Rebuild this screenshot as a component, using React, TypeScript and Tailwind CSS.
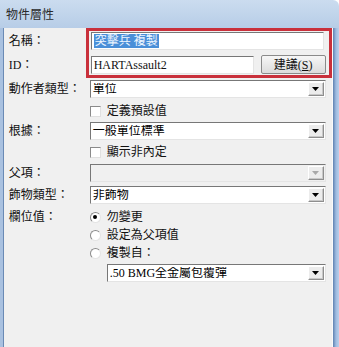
import type { ReactNode } from 'react'

// ─── Small Win32-ish controls ────────────────────────────────────────────────

function Arrow({ disabled = false }: { disabled?: boolean }) {
  return (
    <div className="w-[16px] h-[14px] mr-[1px] flex items-center justify-center bg-[#ececec] border border-t-white border-l-white border-r-[#8e8e8e] border-b-[#8e8e8e] shadow-[inset_-1px_-1px_0_#c8c8c8]">
      <svg width="7" height="4" viewBox="0 0 7 4">
        <polygon points="0,0 7,0 3.5,4" fill={disabled ? '#a8a8a8' : '#000'} />
      </svg>
    </div>
  )
}

function Dropdown({ value, disabled = false, className = '' }: { value?: string; disabled?: boolean; className?: string }) {
  return (
    <div className={`h-[18px] flex items-center border border-t-[#777] border-l-[#777] border-r-[#e4e4e4] border-b-[#e4e4e4] ${disabled ? 'bg-[#f0f0f0]' : 'bg-white'} ${className}`}>
      <span className="flex-1 pl-[2px] text-[12px] leading-none text-black truncate">{value}</span>
      <Arrow disabled={disabled} />
    </div>
  )
}

function Check({ label }: { label: string }) {
  return (
    <div className="h-[18px] flex items-center">
      <div className="w-[11px] h-[11px] bg-white border border-t-[#8a8a8a] border-l-[#8a8a8a] border-r-[#e0e0e0] border-b-[#e0e0e0]" />
      <span className="ml-[6px] text-[12px] leading-none">{label}</span>
    </div>
  )
}

function Radio({ label, checked = false }: { label: string; checked?: boolean }) {
  return (
    <div className="h-[18px] flex items-center">
      <div className="w-[11px] h-[11px] rounded-full bg-white border border-t-[#8a8a8a] border-l-[#8a8a8a] border-r-[#e4e4e4] border-b-[#e4e4e4] flex items-center justify-center">
        {checked && <div className="w-[4px] h-[4px] rounded-full bg-black" />}
      </div>
      <span className="ml-[6px] text-[12px] leading-none">{label}</span>
    </div>
  )
}

function Row({ label, children, className = '' }: { label?: string; children: ReactNode; className?: string }) {
  return (
    <div className={`grid grid-cols-[86px_1fr] items-center ${className}`}>
      <span className="pl-[5px] text-[12px] leading-none">{label}</span>
      <div>{children}</div>
    </div>
  )
}

// ─── Dialog ──────────────────────────────────────────────────────────────────

export default function App() {
  return (
    <div className="w-[339px] h-[347px] overflow-hidden flex flex-col text-[#111] [font-family:'Liberation_Serif','Noto_Sans_CJK_TC',serif]">

      {/* Title bar */}
      <div className="h-[28px] flex-shrink-0 flex items-center pl-[6px] bg-gradient-to-b from-[#cbdcef] to-[#b7cde7] rounded-tr-[6px]">
        <span className="text-[12px] leading-none text-[#2a2a2a] [font-family:'Noto_Sans_CJK_TC',sans-serif]">物件層性</span>
      </div>

      <div className="flex-1 flex">
        {/* Left frame */}
        <div className="w-[4px] bg-[#a9c1e0] border-r border-r-[#6a8ab5]" />

        {/* Client area */}
        <div className="relative flex-1 bg-[#f0f0f0] pr-[6px] flex flex-col">

          <Row label="名稱：" className="mt-[4px] h-[18px]">
            <div className="ml-[1px] mr-[2px] h-[18px] flex items-center bg-white border border-t-[#777] border-l-[#777] border-r-[#e4e4e4] border-b-[#e4e4e4]">
              <span className="ml-[2px] px-[1px] h-[14px] flex items-center bg-[#4a8fd8] text-[#eef6ff] text-[12px] leading-none">突擊兵 複製</span>
            </div>
          </Row>

          <Row label="ID：" className="mt-[5px] h-[19px]">
            <div className="ml-[1px] flex items-center gap-[7px]">
              <div className="w-[163px] h-[18px] flex items-center bg-white border border-t-[#777] border-l-[#777] border-r-[#e4e4e4] border-b-[#e4e4e4]">
                <span className="pl-[2px] text-[12px] leading-none">HARTAssault2</span>
              </div>
              <button
                type="button"
                className="w-[65px] h-[19px] flex items-center justify-center text-[12px] leading-none bg-gradient-to-b from-[#f6f6f6] to-[#dcdcdc] border border-[#8a8a8a] rounded-[2px]"
              >
                建議(<span className="underline">S</span>)
              </button>
            </div>
          </Row>

          <Row label="動作者類型：" className="mt-[6px] h-[18px]">
            <Dropdown value="單位" />
          </Row>

          <Row className="mt-[4px] h-[18px]">
            <Check label="定義預設值" />
          </Row>

          <Row label="根據：" className="mt-[2px] h-[18px]">
            <Dropdown value="一般單位標準" />
          </Row>

          <Row className="mt-[3px] h-[18px]">
            <Check label="顯示非內定" />
          </Row>

          <Row label="父項：" className="mt-[3px] h-[18px]">
            <Dropdown disabled />
          </Row>

          <Row label="飾物類型：" className="mt-[4px] h-[18px]">
            <Dropdown value="非飾物" />
          </Row>

          <Row label="欄位值：" className="mt-[4px] h-[18px]">
            <Radio label="勿變更" checked />
          </Row>
          <Row className="h-[18px]">
            <Radio label="設定為父項值" />
          </Row>
          <Row className="h-[18px]">
            <Radio label="複製自：" />
          </Row>

          <Row className="mt-[2px] h-[18px]">
            <Dropdown value=".50 BMG全金屬包覆彈" className="ml-[17px]" />
          </Row>

          {/* Red annotation box over name/ID */}
          <div className="absolute left-[82px] top-0 w-[246px] h-[50px] border-[3px] border-[#c9303b] pointer-events-none" />
        </div>

        {/* Right frame */}
        <div className="w-[8px] bg-gradient-to-r from-[#5f82b1] via-[#9fbbe0] to-[#b9cfea] border-l border-l-[#fafafa]" />
      </div>
    </div>
  )
}
